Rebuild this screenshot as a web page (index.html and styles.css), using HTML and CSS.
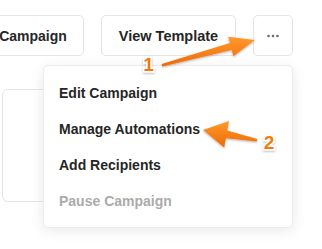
FILE: index.html
```html
<!DOCTYPE html>
<html lang="en">
<head>
  <meta charset="UTF-8" />
  <title>Campaign Actions</title>
  <meta name="viewport" content="width=device-width, initial-scale=1" />
  <link rel="stylesheet" href="styles.css">
</head>
<body>
  <main class="page">
    <div class="toolbar">
      <button class="btn btn-campaign" type="button">Campaign</button>
      <button class="btn btn-template" type="button">View Template</button>
      <div class="more">
        <button class="btn btn-more" type="button" aria-label="More actions">
          <svg width="12" height="4" viewBox="0 0 12 4">
            <circle cx="1.5" cy="2" r="1.3" />
            <circle cx="6" cy="2" r="1.3" />
            <circle cx="10.5" cy="2" r="1.3" />
          </svg>
        </button>
        <ul class="menu">
          <li>Edit Campaign</li>
          <li>Manage Automations</li>
          <li>Add Recipients</li>
          <li class="disabled">Pause Campaign</li>
        </ul>
      </div>
    </div>
    <div class="card"></div>
  </main>

  <svg class="notes" width="322" height="249" viewBox="0 0 322 249">
    <defs>
      <linearGradient id="orange" x1="0" y1="0" x2="0" y2="1">
        <stop offset="0" stop-color="#ff9a2e" />
        <stop offset="1" stop-color="#ee6a05" />
      </linearGradient>
      <filter id="drop" x="-20%" y="-20%" width="140%" height="160%">
        <feDropShadow dx="0" dy="1" stdDeviation="0.8" flood-color="#000" flood-opacity="0.3" />
      </filter>
    </defs>
    <g filter="url(#drop)">
      <polygon fill="url(#orange)" points="161.7,64 229.9,43.1 228.2,36.8 255,40 233.4,56.2 231.7,49.9 162.3,66.5" />
      <polygon fill="url(#orange)" points="257.2,139 227.3,130.5 229,121 203,130 224.2,147.5 225.9,138.3 256.8,141.5" />
      <text class="num" x="148.5" y="71">1</text>
      <text class="num" x="269" y="149">2</text>
    </g>
  </svg>
</body>
</html>
```

FILE: styles.css
```css
*, *::before, *::after {
  box-sizing: border-box;
}

body {
  font-family: 'Liberation Sans', Arial, sans-serif;
  background-color: #ffffff;
  color: #262626;
  margin: 0;
  padding: 0;
  width: 322px;
  height: 249px;
  overflow: hidden;
  position: relative;
}

.page {
  padding-top: 15px;
}

/* Top action buttons */
.toolbar {
  display: flex;
  gap: 17px;
}

.btn {
  height: 41px;
  background-color: #fff;
  border: 1px solid #e4e4ea;
  border-radius: 5px;
  font-family: inherit;
  font-size: 14px;
  font-weight: 700;
  color: #262626;
  display: flex;
  align-items: center;
  justify-content: center;
  padding: 0;
}

.btn-campaign {
  width: 102px;
  margin-left: -18px;
}

.btn-template {
  width: 135px;
  font-size: 14.5px;
}

.btn-more {
  width: 40px;
  fill: #6b6b73;
}

.more {
  position: relative;
}

/* Dropdown */
.menu {
  position: absolute;
  top: 50px;
  right: 0;
  width: 250px;
  margin: 0;
  padding: 9px 0 8px;
  list-style: none;
  background-color: #fff;
  border: 1px solid #ececf0;
  border-radius: 5px;
  box-shadow: 0 3px 14px rgba(0, 0, 0, 0.09);
  z-index: 5;
}

.menu li {
  height: 36px;
  line-height: 36px;
  padding-left: 15px;
  font-size: 14px;
  font-weight: 700;
  color: #262626;
}

.menu li.disabled {
  color: #ababab;
}

/* Card behind the menu */
.card {
  margin: 33px 0 0 2px;
  width: 180px;
  height: 113px;
  border: 1px solid #e4e4ea;
  border-radius: 6px;
}

/* Annotation arrows */
.notes {
  position: absolute;
  top: 0;
  left: 0;
  z-index: 10;
}

.num {
  font-family: 'Liberation Sans', Arial, sans-serif;
  font-size: 19px;
  font-weight: 700;
  fill: #f57a0c;
  stroke: #fff;
  stroke-width: 3px;
  paint-order: stroke;
  text-anchor: middle;
}
```
